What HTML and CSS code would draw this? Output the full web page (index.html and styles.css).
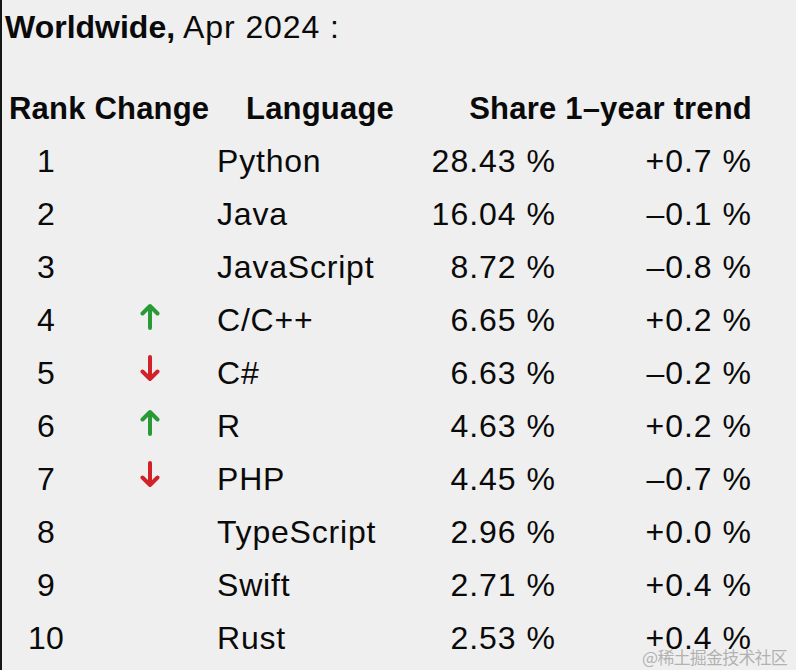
FILE: index.html
```html
<!DOCTYPE html>
<html lang="en">
<head>
<meta charset="utf-8">
<title>Worldwide, Apr 2024</title>
<link rel="stylesheet" href="styles.css">
</head>
<body>
<div class="page">
  <h1 class="title"><b>Worldwide,</b> Apr 2024 :</h1>
  <div class="table">
    <div class="hd hd-rank">Rank Change</div>
    <div class="hd hd-lang">Language</div>
    <div class="hd hd-share">Share 1–year trend</div>

    <div class="c rank">1</div><div class="c chg"></div><div class="c lang">Python</div><div class="c share">28.43 %</div><div class="c trend">+0.7 %</div>
    <div class="c rank">2</div><div class="c chg"></div><div class="c lang">Java</div><div class="c share">16.04 %</div><div class="c trend">–0.1 %</div>
    <div class="c rank">3</div><div class="c chg"></div><div class="c lang">JavaScript</div><div class="c share">8.72 %</div><div class="c trend">–0.8 %</div>
    <div class="c rank">4</div><div class="c chg"><svg class="arrow up" viewBox="0 0 20 28"><path d="M10 26V4M2.5 11.5L10 4l7.5 7.5"/></svg></div><div class="c lang">C/C++</div><div class="c share">6.65 %</div><div class="c trend">+0.2 %</div>
    <div class="c rank">5</div><div class="c chg"><svg class="arrow down" viewBox="0 0 20 28"><path d="M10 2v22M2.5 16.5L10 24l7.5-7.5"/></svg></div><div class="c lang">C#</div><div class="c share">6.63 %</div><div class="c trend">–0.2 %</div>
    <div class="c rank">6</div><div class="c chg"><svg class="arrow up" viewBox="0 0 20 28"><path d="M10 26V4M2.5 11.5L10 4l7.5 7.5"/></svg></div><div class="c lang">R</div><div class="c share">4.63 %</div><div class="c trend">+0.2 %</div>
    <div class="c rank">7</div><div class="c chg"><svg class="arrow down" viewBox="0 0 20 28"><path d="M10 2v22M2.5 16.5L10 24l7.5-7.5"/></svg></div><div class="c lang">PHP</div><div class="c share">4.45 %</div><div class="c trend">–0.7 %</div>
    <div class="c rank">8</div><div class="c chg"></div><div class="c lang">TypeScript</div><div class="c share">2.96 %</div><div class="c trend">+0.0 %</div>
    <div class="c rank">9</div><div class="c chg"></div><div class="c lang">Swift</div><div class="c share">2.71 %</div><div class="c trend">+0.4 %</div>
    <div class="c rank">10</div><div class="c chg"></div><div class="c lang">Rust</div><div class="c share">2.53 %</div><div class="c trend">+0.4 %</div>
  </div>
  <div class="watermark">@稀土掘金技术社区</div>
</div>
</body>
</html>
```

FILE: styles.css
```css
* { box-sizing: border-box; }
html, body {
  margin: 0;
  padding: 0;
  background: #efefef;
}
.page {
  position: relative;
  width: 796px;
  height: 670px;
  border-left: 2px solid #161616;
  background: #efefef;
  color: #0a0a0a;
  font-family: "Liberation Sans", Arial, "Noto Sans CJK SC", sans-serif;
  overflow: hidden;
}
.title {
  margin: 7px 0 0 3px;
  font-size: 32px;
  line-height: 40px;
  font-weight: normal;
  letter-spacing: 0.9px;
}
.title b { font-weight: bold; letter-spacing: 0; }
.table {
  margin-top: 35px;
  display: grid;
  grid-template-columns: 88px 120px 190px 156px 196px;
  grid-auto-rows: 53px;
}
.hd {
  font-size: 31px;
  font-weight: bold;
  line-height: 53px;
  letter-spacing: 0.2px;
  white-space: nowrap;
}
.hd-rank { grid-column: 1 / 3; padding-left: 7px; }
.hd-lang { grid-column: 3; padding-left: 36px; }
.hd-share { grid-column: 4 / 6; text-align: right; }
.c {
  font-size: 32px;
  line-height: 53px;
  letter-spacing: 0.8px;
  white-space: nowrap;
}
.rank { text-align: center; letter-spacing: 0.3px; }
.chg {
  display: flex;
  justify-content: center;
  align-items: flex-start;
  padding-top: 8px;
}
.lang { padding-left: 7px; }
.share { text-align: right; letter-spacing: 1px; }
.trend { text-align: right; letter-spacing: 1px; }
.arrow {
  width: 20px;
  height: 28px;
  fill: none;
  stroke-width: 4;
  stroke-linecap: round;
  stroke-linejoin: round;
}
.arrow.up { stroke: #2a9a36; }
.arrow.down { stroke: #d1222a; }
.watermark {
  position: absolute;
  right: 9px;
  bottom: 3px;
  font-family: "Noto Sans CJK SC", sans-serif;
  font-size: 17px;
  line-height: 20px;
  color: rgba(150, 150, 150, 0.7);
  letter-spacing: -0.8px;
}
```
